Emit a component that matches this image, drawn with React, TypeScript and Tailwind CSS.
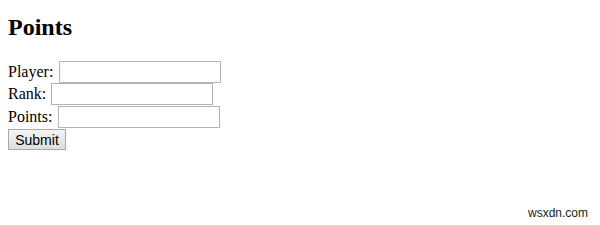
export default function App() {
  const rows = [
    { label: 'Player:', gap: 'ml-[6px]' },
    { label: 'Rank:', gap: 'ml-[5px]' },
    { label: 'Points:', gap: 'ml-[6px]' },
  ]

  return (
    <div className="relative h-[225px] w-[600px] bg-white px-2 pt-[14px] text-black font-['Liberation_Serif','Times_New_Roman',serif]">
      <h2 className="mb-5 text-[24px] font-bold leading-[27px]">Points</h2>

      <form onSubmit={(e) => e.preventDefault()}>
        {rows.map((row) => (
          <div key={row.label} className="flex h-[22.33px] items-center text-[16px]">
            <label className="leading-[18px]">{row.label}</label>
            <input
              type="text"
              className={`${row.gap} h-[22px] w-[162px] border border-[#b4b4b4] bg-white px-[2px] text-[13px] outline-none`}
            />
          </div>
        ))}
        <button
          type="submit"
          className="h-[21px] w-[58px] border border-[#a8a8a8] bg-gradient-to-b from-[#f4f4f4] to-[#dedede] text-[14px] leading-none font-['Liberation_Sans',Arial,sans-serif]"
        >
          Submit
        </button>
      </form>

      {/* watermark */}
      <span className="absolute right-[12px] bottom-[3px] text-[12px] text-[#222] font-['Liberation_Sans',Arial,sans-serif]">
        wsxdn.com
      </span>
    </div>
  )
}
